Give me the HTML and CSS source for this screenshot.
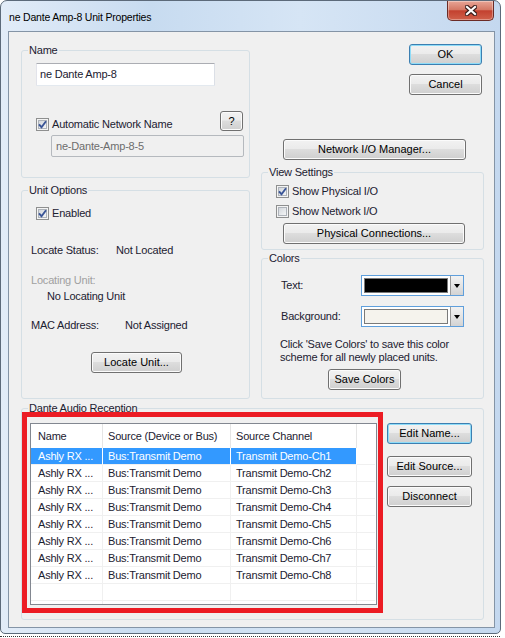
FILE: index.html
```html
<!DOCTYPE html>
<html lang="en">
<head>
    <meta charset="UTF-8">
    <title>ne Dante Amp-8 Unit Properties</title>
    <link rel="stylesheet" href="styles.css">
</head>
<body>

<div class="window">
    <div class="titlebar">
        <span class="title">ne Dante Amp-8 Unit Properties</span>
        <div class="close">
            <svg width="12" height="11" viewBox="0 0 12 11">
                <path d="M2 2 L10 9 M10 2 L2 9" stroke="#3b1d1a" stroke-width="4.4" stroke-linecap="square" fill="none"/>
                <path d="M2 2 L10 9 M10 2 L2 9" stroke="#fff" stroke-width="2.2" stroke-linecap="square" fill="none"/>
            </svg>
        </div>
    </div>

    <div class="client">
        <div class="top">
            <!-- left column: name + unit options -->
            <div class="col-left">
                <fieldset class="group name-group">
                    <legend>Name</legend>
                    <div class="field name-field">ne Dante Amp-8</div>
                    <div class="auto-row">
                        <span class="chk"><span class="box"><svg class="tick" width="9" height="9" viewBox="0 0 9 9"><path d="M1 4.3 L3.5 7.2 L8 1.2"/></svg></span></span>
                        <span class="chk-label">Automatic Network Name</span>
                        <button class="btn btn-help">?</button>
                    </div>
                    <div class="field net-name">ne-Dante-Amp-8-5</div>
                </fieldset>

                <fieldset class="group unit-group">
                    <legend>Unit Options</legend>
                    <div class="chk-row enabled">
                        <span class="chk"><span class="box"><svg class="tick" width="9" height="9" viewBox="0 0 9 9"><path d="M1 4.3 L3.5 7.2 L8 1.2"/></svg></span></span>
                        <span class="chk-label">Enabled</span>
                    </div>
                    <div class="info status"><span class="k">Locate Status:</span><span>Not Located</span></div>
                    <div class="info locating muted">Locating Unit:</div>
                    <div class="info no-unit">No Locating Unit</div>
                    <div class="info mac"><span class="k k-mac">MAC Address:</span><span>Not Assigned</span></div>
                    <button class="btn btn-locate">Locate Unit...</button>
                </fieldset>
            </div>

            <!-- right column: dialog buttons, view settings, colors -->
            <div class="col-right">
                <div class="dlg-buttons">
                    <button class="btn btn-ok focus">OK</button>
                    <button class="btn btn-cancel">Cancel</button>
                </div>
                <button class="btn btn-netio">Network I/O Manager...</button>

                <fieldset class="group view-group">
                    <legend>View Settings</legend>
                    <div class="chk-row phys">
                        <span class="chk"><span class="box"><svg class="tick" width="9" height="9" viewBox="0 0 9 9"><path d="M1 4.3 L3.5 7.2 L8 1.2"/></svg></span></span>
                        <span class="chk-label">Show Physical I/O</span>
                    </div>
                    <div class="chk-row netio">
                        <span class="chk"><span class="box"></span></span>
                        <span class="chk-label">Show Network I/O</span>
                    </div>
                    <button class="btn btn-phys">Physical Connections...</button>
                </fieldset>

                <fieldset class="group colors-group">
                    <legend>Colors</legend>
                    <div class="color-row">
                        <span class="color-label">Text:</span>
                        <div class="combo">
                            <span class="swatch swatch-text"></span>
                            <span class="drop"><span class="arrow"></span></span>
                        </div>
                    </div>
                    <div class="color-row">
                        <span class="color-label">Background:</span>
                        <div class="combo">
                            <span class="swatch swatch-bg"></span>
                            <span class="drop"><span class="arrow"></span></span>
                        </div>
                    </div>
                    <p class="hint">Click 'Save Colors' to save this color<br>scheme for all newly placed units.</p>
                    <button class="btn btn-save">Save Colors</button>
                </fieldset>
            </div>
        </div>

        <fieldset class="group dante-group">
            <legend>Dante Audio Reception</legend>
            <div class="dante-body">
                <div class="redbox">
                    <div class="list">
                        <div class="lv-head">
                            <div class="c1">Name</div>
                            <div class="c2">Source (Device or Bus)</div>
                            <div class="c3">Source Channel</div>
                            <div class="c4"></div>
                        </div>
                        <div id="lv-rows" class="lv-rows"></div>
                    </div>
                </div>
                <div class="dante-btns">
                    <button class="btn btn-edit-name focus">Edit Name...</button>
                    <button class="btn btn-edit-src">Edit Source...</button>
                    <button class="btn btn-disc">Disconnect</button>
                </div>
            </div>
        </fieldset>
    </div>
</div>
<div class="desk-edge"></div>

<script>
// fill the reception list: 8 channels, first one selected, then blank rows
const rows = document.getElementById("lv-rows");
for (let i = 1; i <= 8; i++) {
    const r = document.createElement("div");
    r.className = "lv-row" + (i === 1 ? " sel" : "");
    r.innerHTML =
        '<div class="c1">Ashly RX ...</div>' +
        '<div class="c2">Bus:Transmit Demo</div>' +
        '<div class="c3">Transmit Demo-Ch' + i + '</div>' +
        '<div class="c4"></div>';
    rows.appendChild(r);
}
["", " stub"].forEach(extra => {
    const r = document.createElement("div");
    r.className = "lv-row" + extra;
    r.innerHTML = '<div class="c1"></div><div class="c2"></div><div class="c3"></div><div class="c4"></div>';
    rows.appendChild(r);
});
</script>

</body>
</html>
```

FILE: styles.css
```css
* { box-sizing: border-box; }
body { margin: 0; background: #fff; font-family: "Liberation Sans", Arial, sans-serif; font-size: 11px; color: #1c2130; letter-spacing: -0.2px; }

/* window frame */
.window { width: 501px; height: 634px; border: 1px solid #5c6a7a; border-radius: 7px 7px 5px 5px; padding: 0 5px 5px 7px; display: flex; flex-direction: column;
    background: linear-gradient(to right, #e2ecf8, #c7dbf0 30%, #d6e5f5 60%, #c4d8ef); }
.titlebar { height: 30px; display: flex; align-items: flex-start; }
.title { flex: 1; padding: 10px 0 0 1px; line-height: 13px; font-size: 10.5px; color: #000; }
.close { width: 47px; height: 20px; margin-right: 1px; border: 1px solid #6b2b26; border-top: none; border-radius: 0 0 5px 5px; display: flex; align-items: center; justify-content: center;
    background: linear-gradient(#e8a596, #d57966 45%, #c3412f 52%, #d0604a); box-shadow: inset 0 0 0 1px rgba(255,255,255,0.35); }
.desk-edge { width: 500px; margin-top: 2px; border-top: 1px dotted #333; }

.client { flex: 1; background: #f0f0f0; border: 1px solid #8494a6; }
.top { display: flex; padding-left: 12px; }
.col-left { width: 229px; }
.col-right { width: 223px; margin-left: 11px; }

/* group boxes */
.group { margin: 0; padding: 0; min-width: 0; border: 1px solid #d5dfe5; border-radius: 3px; }
.group legend { margin-left: 6px; padding: 0 1px; line-height: 13px; }

/* checkboxes */
.chk { display: inline-flex; width: 13px; height: 13px; border: 1px solid #8e8f8f; padding: 1px; background: #f4f4f4; flex: none; }
.chk .box { display: flex; width: 9px; height: 9px; border: 1px solid #aeb3ba; background: linear-gradient(135deg, #d3d7dc, #f4f5f6); }
.tick { margin: -1px; overflow: visible; }
.tick path { fill: none; stroke: #3a5597; stroke-width: 1.9; }
.chk-row { display: flex; align-items: flex-end; line-height: 13px; }
.chk-label { margin-left: 3px; line-height: 13px; }

/* text fields */
.field { height: 23px; padding: 0 3px; line-height: 21px; border: 1px solid #abadb3; border-color: #abadb3 #dbdfe6 #e3e9ef #e2e3ea; background: #fff; border-radius: 1px; }

/* buttons */
.btn { display: block; height: 21px; padding: 0; font: inherit; color: #000; text-align: center; line-height: 19px; border: 1px solid #707070; border-radius: 3px;
    background: linear-gradient(#f2f2f2, #ebebeb 45%, #dddddd 50%, #cfcfcf); box-shadow: inset 0 0 0 1px #fbfbfb; }
.btn.focus { border-color: #3c7fb1; box-shadow: inset 0 0 0 1px #8edcf8; }

/* name group */
.name-group { margin-top: 12px; padding-bottom: 20px; }
.name-field { margin: 6px 0 0 14px; width: 179px; }
.auto-row { display: flex; align-items: flex-end; height: 20px; margin-top: 25px; padding-left: 14px; }
.btn-help { margin-left: auto; margin-right: 6px; width: 23px; height: 20px; line-height: 18px; }
.net-name { margin: 4px 0 0 29px; width: 193px; height: 22px; line-height: 20px; padding-left: 4px; background: #f0f0f0; color: #6d6d6d; border-color: #b5b9be; border-radius: 2px; }

/* unit options */
.unit-group { margin-top: 6px; padding-bottom: 25px; }
.enabled { margin: 10px 0 0 14px; }
.info { display: flex; margin-left: 9px; line-height: 13px; }
.info .k { width: 85px; }
.info .k-mac { width: 94px; }
.status { margin-top: 24px; }
.locating { margin-top: 17px; }
.muted { color: #a0a0a0; }
.no-unit { margin-top: 3px; margin-left: 25px; }
.mac { margin-top: 16px; }
.btn-locate { margin: 20px 0 0 69px; width: 91px; }

/* right column */
.dlg-buttons { display: flex; flex-direction: column; align-items: flex-end; padding-right: 2px; }
.btn-ok { margin-top: 12px; width: 73px; }
.btn-cancel { margin-top: 9px; width: 73px; }
.btn-netio { margin: 44px 0 0 22px; width: 183px; }

.view-group { margin-top: 6px; padding-bottom: 5px; }
.phys { margin: 6px 0 0 14px; }
.netio { margin: 7px 0 0 14px; }
.btn-phys { margin: 5px 0 0 21px; width: 182px; }

.colors-group { margin-top: 2px; padding-bottom: 8px; }
.color-row { display: flex; align-items: center; margin-top: 10px; padding-left: 19px; }
.color-label { width: 80px; padding-bottom: 2px; }
.combo { display: flex; width: 103px; height: 21px; border: 1px solid #5f9fdc; background: #fff; }
.swatch { flex: 1; margin: 2px; border: 1px solid #7a7a7a; }
.swatch-text { background: #000; }
.swatch-bg { background: #f5f3ed; }
.drop { width: 13px; display: flex; align-items: center; justify-content: center; border-left: 1px solid #9a9a9a; background: linear-gradient(#f2f2f2, #e4e4e4 50%, #d3d3d3); }
.arrow { width: 0; height: 0; border-left: 3.5px solid transparent; border-right: 3.5px solid transparent; border-top: 4px solid #000; }
.hint { margin: 11px 0 0 18px; line-height: 13px; }
.btn-save { margin: 5px 0 0 66px; width: 73px; }

/* dante audio reception */
.dante-group { margin: 3px 0 0 12px; width: 463px; padding-bottom: 6px; }
.dante-body { display: flex; align-items: flex-start; }
.redbox { margin-top: -3px; width: 361px; border: 5px solid #ec1c24; padding: 6px 1px 3px 3px; }
.list { height: 182px; border: 1px solid #828790; background: #fff; display: flex; flex-direction: column; }
.lv-head { display: flex; height: 24px; line-height: 24px; }
.lv-head > div { border-right: 1px solid #e5e5e5; }
.lv-rows { flex: 1; display: flex; flex-direction: column; }
.lv-row { display: flex; height: 17px; line-height: 16px; }
.lv-row > div { border-right: 1px solid #f0f0f0; border-bottom: 1px solid #f0f0f0; white-space: nowrap; overflow: hidden; }
.lv-row.stub { flex: 1; height: auto; }
.lv-row.stub > div { border-bottom: none; }
.c1 { width: 72px; padding-left: 7px; }
.c2 { width: 128px; padding-left: 5px; }
.c3 { width: 126px; padding-left: 5px; }
.c4 { width: 18px; }
.lv-head .c4, .lv-row .c4 { border-right: none; }
.lv-row.sel .c1, .lv-row.sel .c2, .lv-row.sel .c3 { background: #3399ff; color: #fff; border-right-color: #fff; }

.dante-btns { display: flex; flex-direction: column; margin-left: 4px; }
.dante-btns .btn { width: 85px; }
.btn-edit-name { margin-top: 8px; }
.btn-edit-src { margin-top: 12px; }
.btn-disc { margin-top: 9px; }
```
